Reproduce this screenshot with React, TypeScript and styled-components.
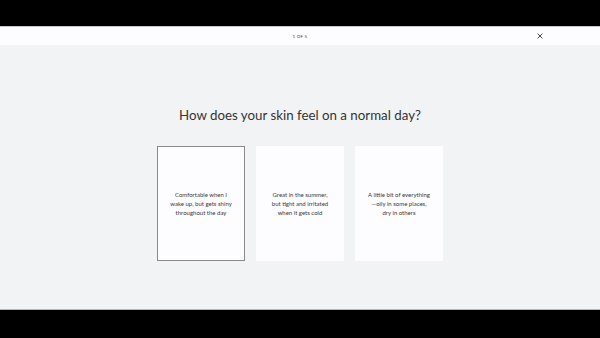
import React from 'react';
import styled, { createGlobalStyle } from 'styled-components';

const options = [
  ['Comfortable when I', 'wake up, but gets shiny', 'throughout the day'],
  ['Great in the summer,', 'but tight and irritated', 'when it gets cold'],
  ['A little bit of everything', '—oily in some places,', 'dry in others'],
];

const App: React.FC = () => {
  return (
    <>
      <GlobalStyle />
      <Frame>
        <Letterbox />
        <Header>
          <Progress>1 OF 5</Progress>
          <Close aria-label='close'>
            <svg width='6' height='6' viewBox='0 0 10 10'>
              <path d='M1 1 L9 9 M9 1 L1 9' stroke='#333' strokeWidth='1.5' />
            </svg>
          </Close>
        </Header>
        <Main>
          <Question>How does your skin feel on a normal day?</Question>
          <Options>
            {options.map((lines, i) => (
              <Card key={i} selected={i === 0}>
                <CardText>
                  {lines.map((l) => (
                    <div key={l}>{l}</div>
                  ))}
                </CardText>
              </Card>
            ))}
          </Options>
        </Main>
        <Letterbox />
      </Frame>
    </>
  );
};

const GlobalStyle = createGlobalStyle`
  html, body {
    margin: 0;
    padding: 0;
    background: #000;
  }
`;

const Frame = styled.div`
  width: 600px;
  height: 338px;
  display: flex;
  flex-direction: column;
  font-family: 'Lato', 'Liberation Sans', sans-serif;
`;

const Letterbox = styled.div`
  height: 26px;
  flex-shrink: 0;
  background: #000;
  &:last-child {
    height: 28px;
    border-top: 1px solid #b8b8b8;
  }
`;

const Header = styled.header`
  height: 18px;
  flex-shrink: 0;
  background: #fdfdff;
  border-top: 1px solid #c8c8c8;
  display: flex;
  align-items: center;
  justify-content: center;
  position: relative;
`;

const Progress = styled.span`
  font-size: 4.5px;
  letter-spacing: 0.2px;
  color: #444;
`;

const Close = styled.button`
  position: absolute;
  left: 537px;
  top: 6px;
  padding: 0;
  border: none;
  background: none;
  display: flex;
`;

const Main = styled.main`
  flex: 1;
  background: #f2f3f5;
  display: flex;
  flex-direction: column;
  align-items: center;
  padding-top: 60px;
`;

const Question = styled.h1`
  margin: 0;
  font-size: 13.3px;
  font-weight: 400;
  color: #333;
  line-height: 20px;
`;

const Options = styled.div`
  display: flex;
  gap: 11px;
  margin-top: 21px;
`;

const Card = styled.div<{ selected?: boolean }>`
  width: 88px;
  height: 115px;
  box-sizing: border-box;
  background: #fdfcfe;
  border: 1px solid ${(p) => (p.selected ? '#8a8a8a' : 'transparent')};
  display: flex;
  align-items: center;
  justify-content: center;
  text-align: center;
`;

const CardText = styled.div`
  font-size: 6px;
  line-height: 9px;
  color: #3a3a3a;
`;

export default App;
